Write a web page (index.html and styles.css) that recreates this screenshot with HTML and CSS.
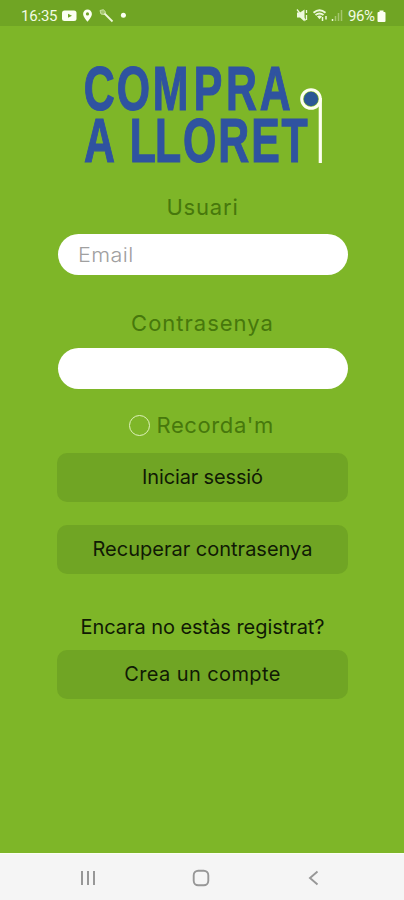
FILE: index.html
```html
<!DOCTYPE html>
<html lang="ca">
<head>
<meta charset="utf-8">
<title>Compra a Lloret</title>
<link rel="stylesheet" href="styles.css">
</head>
<body>
<div class="screen">
  <header class="status">
    <span class="clock">16:35</span>
    <svg class="status-left" width="68" height="16" viewBox="62 8 68 16">
      <rect x="62" y="10.5" width="14.5" height="10.5" rx="2.5" fill="#fbfff2"/>
      <path d="M68 13.7l4 2-4 2z" fill="#70a524"/>
      <path d="M87.5 9.5a4.4 4.4 0 0 0-4.4 4.4c0 3 4.4 7.8 4.4 7.8s4.4-4.8 4.4-7.8a4.4 4.4 0 0 0-4.4-4.4z" fill="#fbfff2"/>
      <circle cx="87.5" cy="13.9" r="1.6" fill="#70a524"/>
      <path d="M100 10.5l3.5-.8 2 2.4-1.3 2.4-3.2-.5z" fill="#a3c66d" stroke="#c9e3a0" stroke-width="1"/>
      <path d="M104.500 13.500l8 8" stroke="#edf8d9" stroke-width="1.800"/>
      <circle cx="123.4" cy="15.3" r="2.5" fill="#fbfff2"/>
    </svg>
    <svg class="status-right" width="48" height="16" viewBox="294 8 48 16">
      <path d="M296 12.5h3l4.500-3v12l-4.500-4H296z" fill="#eef9dc"/>
      <path d="M296 9.500l8.500 11M305.500 10v3M305.500 15v5" stroke="#eef9dc" stroke-width="1.300"/>
      <path d="M312.500 12.700q6-5 12 0M314.500 15q4-3.200 8 0" fill="none" stroke="#eef9dc" stroke-width="1.900"/>
      <path d="M316 16.300q2.500-1.800 5 0l-2.500 3z" fill="#eef9dc"/>
      <path d="M321.500 17v4M325 19.500V16" stroke="#eef9dc" stroke-width="1.500"/>
      <path d="M331.500 19V21" stroke="#eef9dc" stroke-width="1.500"/>
      <path d="M334.500 16v5M337.500 13v8M340.500 10v11" stroke="#a3c66d" stroke-width="1.500"/>
    </svg>
    <span class="percent">96%</span>
    <svg width="9" height="14" viewBox="0 0 9 14"><path d="M2.500 1.500h4V3H7.500q1 0 1 1v8q0 1-1 1h-6q-1 0-1-1V4q0-1 1-1h1z" fill="#fbfff2"/></svg>
  </header>

  <main class="login">
    <svg class="logo" width="244" height="104" viewBox="82 62 244 104" role="img">
      <g class="wordmark" transform="scale(.68 1)">
        <text y="110.500" x="123.200 171.800 224.500 285 332.500 382">COMPRA</text>
        <text y="162.500" x="123.500 170 191 228 269 321 369.500 414">A LLORET</text>
      </g>
      <path d="M320.300 98v65" stroke="#fdfff0" stroke-width="3.200"/>
      <circle cx="311" cy="99" r="9.300" fill="#7eb628" stroke="#fdfff0" stroke-width="3"/>
      <circle cx="311" cy="99" r="7.200" fill="#2b5795"/>
    </svg>

    <label class="label user-label"><span class="t-user">Usuari</span></label>
    <div class="field"><span class="t-email">Email</span></div>
    <label class="label pass-label"><span class="t-pass">Contrasenya</span></label>
    <div class="field"></div>
    <div class="remember"><i class="radio"></i><span class="t-remember">Recorda'm</span></div>
    <div class="button"><span class="t-login">Iniciar sessió</span></div>
    <div class="button recover"><span>Recuperar contrasenya</span></div>
    <p class="question"><span class="t-question">Encara no estàs registrat?</span></p>
    <div class="button"><span class="t-create">Crea un compte</span></div>
  </main>

  <nav class="navbar">
    <svg width="18" height="18" viewBox="0 0 18 18"><path d="M3 2v14M9 2v14M15 2v14" stroke="#979797" stroke-width="2"/></svg>
    <svg width="18" height="18" viewBox="0 0 18 18"><rect x="1.700" y="1.700" width="14.600" height="14.600" rx="4.500" fill="none" stroke="#979797" stroke-width="1.900"/></svg>
    <svg width="18" height="18" viewBox="0 0 18 18"><path d="M12.500 2.500L5 9l7.500 6.500" fill="none" stroke="#979797" stroke-width="1.900"/></svg>
  </nav>
</div>
</body>
</html>
```
FILE: styles.css
```css
* { box-sizing: border-box; }
body { margin: 0; font-family: Inter, "Open Sans", sans-serif; }
.screen { width: 404px; height: 900px; display: flex; flex-direction: column; background: #7eb628; overflow: hidden; }
.status { height: 26px; flex: none; display: flex; align-items: center; padding: 5px 18px 0 21px; background: #70a524; color: #f3fbe5; font: 400 15px/20px Roboto, sans-serif; }
.clock { width: 41px; letter-spacing: -0.2px; white-space: nowrap; }
.status-right { margin-left: auto; }
.percent { width: 29px; margin-left: 5px; letter-spacing: -0.4px; }
.login { flex: 1; display: flex; flex-direction: column; align-items: center; padding: 36px 0 0 1px; }
.logo { display: block; margin-left: 3px; flex: none; overflow: visible; }
.wordmark { font: 700 63px "Liberation Sans", sans-serif; fill: #2f53a0; stroke: #2f53a0; stroke-width: 1.2px; }
.label { color: #47780c; font-size: 22px; line-height: 28px; }
.label span, .button span, .question span { display: inline-block; white-space: nowrap; }
.t-user, .t-pass, .t-remember, .t-email { transform-origin: left center; }
.t-user { letter-spacing: 0.8px; }
.t-pass { letter-spacing: 1px; }
.t-remember { letter-spacing: 0.6px; }
.t-email { display: inline-block; letter-spacing: 0.4px; transform: scaleX(1.08); }
.t-login { letter-spacing: -0.15px; }
.t-create { letter-spacing: 0.4px; }
.t-question { letter-spacing: -0.05px; }
.user-label { margin-top: 27px; height: 28px; }
.field { width: 290px; height: 41px; flex: none; margin-top: 13px; padding-left: 20px; border-radius: 21px; background: #fff; color: #a0a0a0; font-size: 20px; font-weight: 300; line-height: 42px; }
.pass-label { margin-top: 34px; height: 28px; }
.pass-label + .field { margin-top: 11px; }
.remember { display: flex; align-items: center; width: 148px; height: 28px; margin-top: 22px; gap: 7px; color: #47780c; font-size: 22px; }
.remember span { white-space: nowrap; }
.radio { width: 21px; height: 21px; flex: none; border: 1.5px solid #dff2ba; border-radius: 50%; }
.button { width: 291px; height: 49px; flex: none; margin-top: 14px; border-radius: 10px; background: #70a524; color: #101a04; font-size: 20px; line-height: 49px; text-align: center; }
.recover { margin-top: 23px; }
.question { margin: 41px 0 0; height: 24px; color: #101a04; font-size: 20px; line-height: 24px; }
.question + .button { margin-top: 11px; }
.navbar { height: 47px; flex: none; display: flex; align-items: center; justify-content: space-between; padding: 2px 81px 0 79px; background: #f5f5f5; border-top: 1px solid #fbfff2; }
```
